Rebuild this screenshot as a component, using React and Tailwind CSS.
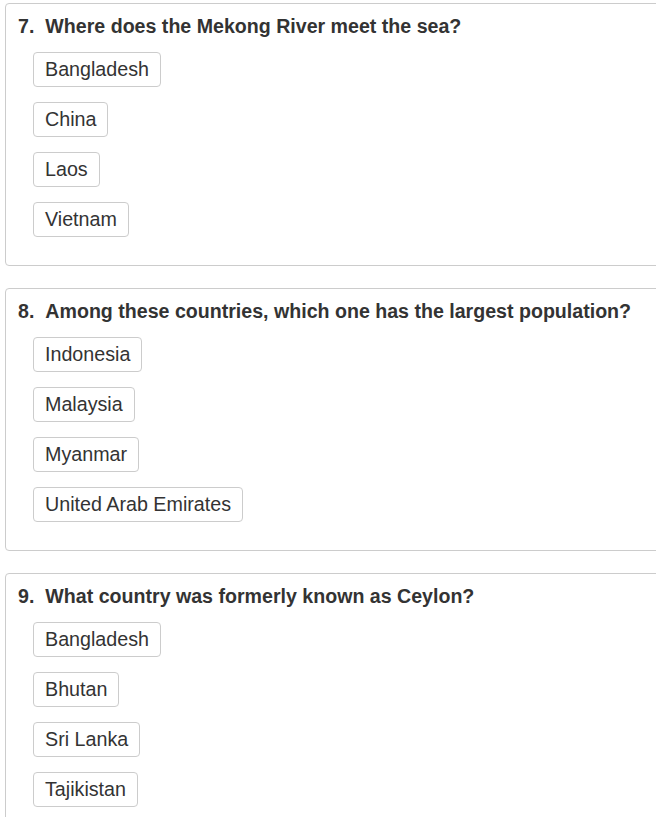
const questions = [
  {
    num: 7,
    text: "Where does the Mekong River meet the sea?",
    options: ["Bangladesh", "China", "Laos", "Vietnam"],
  },
  {
    num: 8,
    text: "Among these countries, which one has the largest population?",
    options: ["Indonesia", "Malaysia", "Myanmar", "United Arab Emirates"],
  },
  {
    num: 9,
    text: "What country was formerly known as Ceylon?",
    options: ["Bangladesh", "Bhutan", "Sri Lanka", "Tajikistan"],
  },
];

function QuestionCard({ q }) {
  return (
    <div className="w-[680px] border border-[#cccccc] rounded-[4px] pl-[12px] pt-[10px] pb-[28px]">
      <h3 className="flex gap-[11px] text-[19.6px] leading-[24px] font-bold text-[#333333]">
        <span>{q.num}.</span>
        <span>{q.text}</span>
      </h3>
      <div className="flex flex-col items-start gap-[15px] mt-[14px] pl-[15px]">
        {q.options.map((opt) => (
          <button
            key={opt}
            className="border border-[#cccccc] rounded-[4px] bg-white px-[11px] py-[4px] text-[19.7px] leading-[25px] text-[#333333]"
          >
            {opt}
          </button>
        ))}
      </div>
    </div>
  );
}

export default function App() {
  return (
    <div className="w-[656px] h-[817px] overflow-hidden bg-white" style={{ fontFamily: '"Liberation Sans", Arial, sans-serif' }}>
      <div className="flex flex-col gap-[22px] pl-[5px] pt-[3px]">
        {questions.map((q) => (
          <QuestionCard key={q.num} q={q} />
        ))}
      </div>
    </div>
  );
}
